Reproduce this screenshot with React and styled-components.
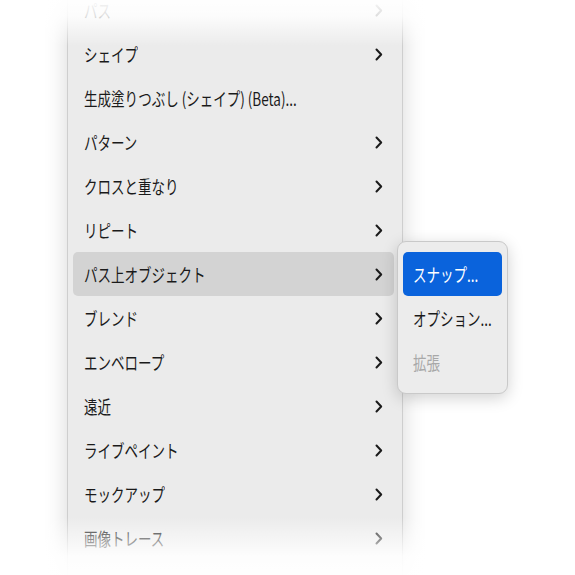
import styled, { createGlobalStyle } from "styled-components";

const GlobalStyle = createGlobalStyle`
  html, body {
    margin: 0;
    background: #ffffff;
  }
  body {
    font-family: "Noto Sans CJK JP", "Noto Sans", sans-serif;
  }
`;

// Whole screenshot area
const Page = styled.div`
  position: relative;
  width: 575px;
  height: 575px;
  overflow: hidden;
  background: #ffffff;
  padding-left: 67px;
  box-sizing: border-box;
`;

// Main context menu panel
const Menu = styled.div`
  position: relative;
  width: 336px;
  margin-top: -18px;
  padding: 6px 0 40px;
  background: #ebebeb;
  border: 1px solid rgba(0, 0, 0, 0.12);
  border-top: none;
  border-bottom: none;
  box-shadow: 0 0 22px rgba(0, 0, 0, 0.16);
  box-sizing: border-box;
`;

const Row = styled.div`
  position: relative;
  display: flex;
  align-items: center;
  justify-content: space-between;
  height: 44px;
  margin: 0 8px 0 5px;
  padding: 0 11px 0 11px;
  border-radius: 5px;
  background: ${(p) => (p.$active ? "#d3d3d3" : "transparent")};
  color: ${(p) => (p.$disabled ? "#a3a3a3" : "#1a1a1a")};
`;

// Labels are rendered condensed to match the screenshot
const Label = styled.span`
  display: inline-block;
  font-size: 18px;
  white-space: nowrap;
  transform: scaleX(0.75);
  transform-origin: left center;
`;

const Chevron = styled.svg`
  width: 8px;
  height: 13px;
  flex: none;
`;

// Submenu popping out of the active row
const SubMenu = styled.div`
  position: absolute;
  top: -11px;
  left: 324px;
  width: 111px;
  padding: 10px 5px 9px;
  background: #ececec;
  border: 1px solid #c9c9c9;
  border-radius: 9px;
  box-shadow: 0 4px 16px rgba(0, 0, 0, 0.18);
  box-sizing: border-box;
  z-index: 2;
`;

const SubItem = styled.div`
  display: flex;
  align-items: center;
  height: 44px;
  padding: 0 10px;
  border-radius: 5px;
  background: ${(p) => (p.$active ? "#0a63dc" : "transparent")};
  color: ${(p) => (p.$active ? "#ffffff" : p.$disabled ? "#a8a8a8" : "#1a1a1a")};
`;

// White fades at the top and bottom edges of the screenshot
const TopFade = styled.div`
  position: absolute;
  top: 0;
  left: 0;
  right: 0;
  height: 46px;
  background: linear-gradient(
    to bottom,
    rgba(255, 255, 255, 0.97) 0%,
    rgba(255, 255, 255, 0.85) 35%,
    rgba(255, 255, 255, 0) 100%
  );
  pointer-events: none;
  z-index: 3;
`;

const BottomFade = styled.div`
  position: absolute;
  bottom: 0;
  left: 0;
  right: 0;
  height: 58px;
  background: linear-gradient(
    to bottom,
    rgba(255, 255, 255, 0) 0%,
    rgba(255, 255, 255, 0.9) 68%,
    rgba(255, 255, 255, 0.97) 100%
  );
  pointer-events: none;
  z-index: 3;
`;

const items = [
  { label: "パス", sub: true },
  { label: "シェイプ", sub: true },
  { label: "生成塗りつぶし (シェイプ) (Beta)..." },
  { label: "パターン", sub: true },
  { label: "クロスと重なり", sub: true },
  { label: "リピート", sub: true },
  { label: "パス上オブジェクト", sub: true, active: true },
  { label: "ブレンド", sub: true },
  { label: "エンベロープ", sub: true },
  { label: "遠近", sub: true },
  { label: "ライブペイント", sub: true },
  { label: "モックアップ", sub: true },
  { label: "画像トレース", sub: true },
];

const subItems = [
  { label: "スナップ...", active: true },
  { label: "オプション..." },
  { label: "拡張", disabled: true },
];

function Arrow() {
  return (
    <Chevron viewBox="0 0 8 13">
      <path
        d="M1.5 1.5 L6.2 6.5 L1.5 11.5"
        fill="none"
        stroke="currentColor"
        strokeWidth="2"
        strokeLinecap="round"
        strokeLinejoin="round"
      />
    </Chevron>
  );
}

export default function App() {
  return (
    <>
      <GlobalStyle />
      <Page>
        <Menu>
          {items.map((it) => (
            <Row key={it.label} $active={it.active} $disabled={it.disabled}>
              <Label>{it.label}</Label>
              {it.sub && <Arrow />}
              {it.active && (
                <SubMenu>
                  {subItems.map((s) => (
                    <SubItem key={s.label} $active={s.active} $disabled={s.disabled}>
                      <Label>{s.label}</Label>
                    </SubItem>
                  ))}
                </SubMenu>
              )}
            </Row>
          ))}
        </Menu>
        <TopFade />
        <BottomFade />
      </Page>
    </>
  );
}
